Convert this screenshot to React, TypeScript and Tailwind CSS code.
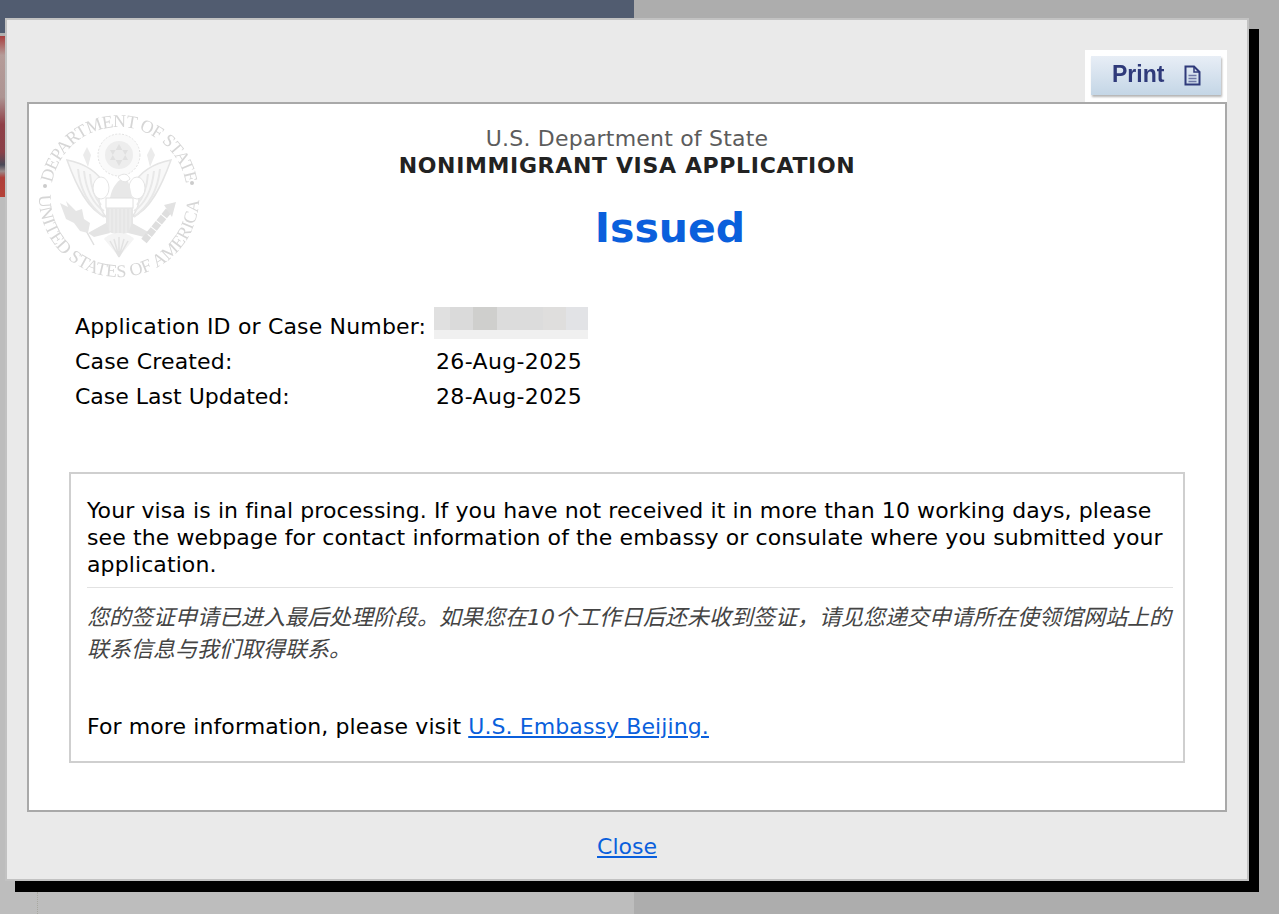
const sans = "font-['DejaVu_Sans','Noto_Sans_CJK_SC',sans-serif]";

// faint seal of the department, sits behind the header
function Seal() {
  const line = "#e4e4e4";
  return (
    <svg width="164" height="168" viewBox="0 0 164 168" className="blur-[0.7px] overflow-visible">
      <defs>
        <path id="sealTop" d="M 13 84 A 68 68 0 0 1 149 84" />
        <path id="sealBottom" d="M 1 84 A 80 80 0 0 0 161 88" />
      </defs>
      <text fontFamily="Liberation Serif" fontSize="18" fill="#d6d6d6">
        <textPath href="#sealTop" startOffset="12" textLength="190" lengthAdjust="spacing">DEPARTMENT OF STATE</textPath>
      </text>
      <text fontFamily="Liberation Serif" fontSize="18" fill="#d6d6d6">
        <textPath href="#sealBottom" textLength="250" lengthAdjust="spacingAndGlyphs">UNITED STATES OF AMERICA</textPath>
      </text>
      <circle cx="7" cy="75" r="2" fill="#cccccc" />
      <circle cx="154" cy="72" r="2" fill="#cccccc" />

      {/* crest */}
      <circle cx="81" cy="44" r="21" fill="#fafafa" stroke="#e0e0e0" strokeWidth="1" strokeDasharray="2 1.5" />
      <circle cx="81" cy="44" r="14" fill="#ededed" />
      <path d="M81 33 L90 49 H72 Z M81 55 L90 39 H72 Z" fill="#e0e0e0" />

      {/* wings */}
      <path d="M29 49 C46 52 62 62 66 74 C58 82 60 96 68 106 C50 100 38 74 29 49 Z" fill="#f8f8f8" stroke={line} strokeWidth="1.5" />
      <path d="M133 49 C116 52 100 62 96 74 C104 82 102 96 94 106 C112 100 124 74 133 49 Z" fill="#f8f8f8" stroke={line} strokeWidth="1.5" />
      <path d="M40 58 C42 78 50 94 66 106 M46 60 C48 78 54 92 66 100 M52 63 C53 76 56 86 63 94" fill="none" stroke="#e8e8e8" strokeWidth="2" />
      <path d="M122 58 C120 78 112 94 96 106 M116 60 C114 78 108 92 96 100 M110 63 C109 76 106 86 99 94" fill="none" stroke="#e8e8e8" strokeWidth="2" />
      <path d="M45 44 L49 36 L53 44 L50 56 Z M117 44 L113 36 L109 44 L112 56 Z" fill="#ebebeb" />

      {/* head and shield */}
      <ellipse cx="63" cy="77" rx="8" ry="11" fill="#ffffff" stroke={line} strokeWidth="1" />
      <ellipse cx="99" cy="77" rx="8" ry="11" fill="#ffffff" stroke={line} strokeWidth="1" />
      <path d="M72 87 C74 76 80 68 88 66 C92 74 93 80 94 87 Z" fill="#e8e8e8" />
      <path d="M80 66 C84 62 90 62 92 68 C88 72 84 72 80 66 Z" fill="#ffffff" stroke={line} />
      <rect x="68" y="87" width="27" height="10" fill="#ffffff" stroke="#e0e0e0" />
      <path d="M68 97 H95 V118 C90 125 73 125 68 118 Z" fill="#e6e6e6" />
      <path d="M72 98 V120 M76 98 V122 M80 98 V123 M84 98 V123 M88 98 V122 M92 98 V120" stroke="#efefef" strokeWidth="1" />

      {/* tail and legs */}
      <path d="M66 128 L81 146 L96 128 C90 120 72 120 66 128 Z" fill="#f4f4f4" />
      <path d="M72 130 L81 146 M76 128 L81 146 M81 126 V146 M86 128 L81 146 M90 130 L81 146" stroke="#e2e2e2" strokeWidth="1.5" />
      <path d="M68 112 L50 122 L56 126 L72 122 Z M94 112 L112 122 L106 126 L90 122 Z" fill="#e4e4e4" />

      {/* olive branch and arrows */}
      <path d="M32 100 L46 116 L56 134" fill="none" stroke="#e0e0e0" strokeWidth="1.5" />
      <path d="M22 92 L30 96 L28 90 L38 100 L44 98 L46 108 L52 112 L50 122 L42 120 L36 112 L28 108 Z" fill="#e6e6e6" />
      <path d="M106 130 L132 98" fill="none" stroke="#dedede" strokeWidth="7" strokeDasharray="7 1" />
      <path d="M126 94 L138 91 L134 106 Z" fill="#e2e2e2" />
    </svg>
  );
}

function PrintButton() {
  return (
    <div className="absolute right-[-2px] top-[-54px] w-[142px] h-[52px] bg-white pt-[6px] pl-[6px]">
      <div className="w-[130px] h-[39px] bg-gradient-to-b from-[#e8eef6] to-[#c4d6e6] shadow-[1px_2px_2px_#b5b5b5] flex items-center pl-[21px] pb-[2px] gap-[20px] blur-[0.5px]">
        <span className="font-['Liberation_Sans',sans-serif] font-bold text-[23px] text-[#2f3a7a] leading-none">Print</span>
        <svg width="17" height="21" viewBox="0 0 17 21" fill="none" stroke="#2f3a7a" strokeWidth="2" className="mt-[1px]">
          <path d="M1.5 1.5 H10 L15.5 7 V19.5 H1.5 Z" />
          <path d="M10 1.5 V7 H15.5" strokeWidth="1.5" />
          <path d="M4.5 10.5 H12.5 M4.5 13.5 H12.5 M4.5 16.5 H12.5" strokeWidth="1.3" stroke="#6f79a6" />
        </svg>
      </div>
    </div>
  );
}

export default function App() {
  return (
    <div className={`relative h-[914px] w-[1279px] overflow-hidden ${sans}`}>
      {/* page dimmed behind the dialog */}
      <div className="flex h-full">
        <div className="w-[634px] bg-[#bdbdbd] relative">
          <div className="h-[18px] bg-[#515c70]" />
          <div className="h-[15px] w-[6px] bg-[#515c70]" />
          <div className="h-[3px] w-[6px] bg-[#b0b0b0]" />
          <div className="h-[161px] w-[6px] bg-[linear-gradient(to_bottom,#a83f3f_0%,#b59c99_12%,#ad9492_38%,#8f3f47_55%,#8a4048_72%,#4a4a58_80%,#9a8a8a_84%,#ae3f3a_88%,#b54238_100%)]" />
          <div className="absolute left-[37px] top-[892px] h-[22px] border-l border-dotted border-[#a8a8a0]" />
        </div>
        <div className="flex-1 bg-[#adadad]" />
      </div>

      {/* dialog */}
      <div className="absolute left-[5px] top-[18px] w-[1244px] h-[863px] bg-[#eaeaea] border-2 border-[#c2c2c2] shadow-[10px_11px_0_#000] flex flex-col px-[20px]">
        <div className="relative mt-[82px] h-[710px] bg-white border-2 border-[#a9a9a9] text-black">
          <PrintButton />
          <div className="absolute left-[9px] top-[7px]">
            <Seal />
          </div>

          <div className="relative pl-[46px] pt-[21px]">
            <div className="w-[1104px] text-center text-[22px] leading-[27px] tracking-[0.2px] text-[#5c5c5c]">U.S. Department of State</div>
            <div className="w-[1104px] text-center text-[22px] leading-[27px] tracking-[0.65px] font-bold text-[#222222]">NONIMMIGRANT VISA APPLICATION</div>
            <div className="w-[1190px] mt-[24px] text-center text-[41px] leading-[50px] font-bold text-[#0a5fdc]">Issued</div>

            <div className="mt-[56px] text-[22px] leading-[35px] tracking-[0.17px]">
              <div className="flex">
                <span className="w-[361px]">Application ID or Case Number:</span>
                <div className="mt-[-2px] ml-[-2px] flex flex-col w-[154px] h-[32px]">
                  <div className="flex h-[23px]">
                    <div className="w-[16px] bg-[#e0e0e0]" />
                    <div className="w-[23px] bg-[#dadada]" />
                    <div className="w-[24px] bg-[#cfcfcd]" />
                    <div className="w-[46px] bg-[#dcdcdc]" />
                    <div className="w-[23px] bg-[#dfdedd]" />
                    <div className="w-[22px] bg-[#e2e3e6]" />
                  </div>
                  <div className="flex-1 bg-[#f0f0f0]" />
                </div>
              </div>
              <div className="flex">
                <span className="w-[361px]">Case Created:</span>
                <span className="tracking-[0.35px]">26-Aug-2025</span>
              </div>
              <div className="flex">
                <span className="w-[361px] tracking-normal">Case Last Updated:</span>
                <span className="tracking-[0.35px]">28-Aug-2025</span>
              </div>
            </div>
          </div>

          <div className="mx-[40px] mt-[58px] h-[291px] border-2 border-[#cfcfcf] pl-[16px] pr-[10px] pt-[23px] text-[22px] leading-[27px] tracking-[0.1px]">
            <p>
              Your visa is in final processing. If you have not received it in more than 10 working days, please
              see the webpage for contact information of the embassy or consulate where you submitted your
              application.
            </p>
            <div className="mt-[9px] border-t border-[#e2e2e2] pt-[14px] text-[22px] leading-[32px] tracking-normal italic text-[#444444]">
              您的签证申请已进入最后处理阶段。如果您在10个工作日后还未收到签证，请见您递交申请所在使领馆网站上的联系信息与我们取得联系。
            </div>
            <p className="mt-[47px]">
              For more information, please visit{" "}
              <a href="#" className="text-[#0a5fdc] underline">U.S. Embassy Beijing.</a>
            </p>
          </div>
        </div>

        <div className="mt-[21px] text-center text-[22px] leading-[28px]">
          <a href="#" className="text-[#0a5fdc] underline">Close</a>
        </div>
      </div>
    </div>
  );
}
